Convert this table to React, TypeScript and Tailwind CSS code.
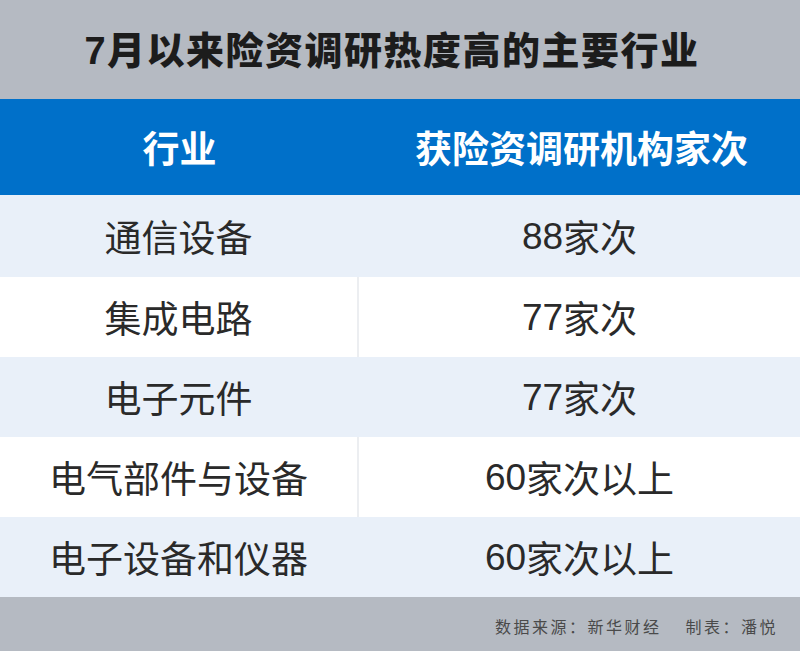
import type { JSX } from "react";

interface Row {
  readonly name: string;
  readonly num: string;
  readonly unit: string;
}

const ROWS: readonly Row[] = [
  { name: "通信设备", num: "88", unit: "家次" },
  { name: "集成电路", num: "77", unit: "家次" },
  { name: "电子元件", num: "77", unit: "家次" },
  { name: "电气部件与设备", num: "60", unit: "家次以上" },
  { name: "电子设备和仪器", num: "60", unit: "家次以上" },
];

const CJK = { fontFamily: '"Noto Sans CJK SC", "Noto Sans", sans-serif' };
const DIGITS = { fontFamily: '"Liberation Sans", "Noto Sans CJK SC", sans-serif' };

export default function App(): JSX.Element {
  return (
    <div className="flex h-[651px] w-[800px] flex-col bg-white" style={CJK}>
      <div className="flex h-[99px] items-center justify-center bg-[#b5bac2] pr-4">
        <h1 className="text-[38px] font-black leading-none tracking-[1.5px] text-[#1c1c1c]">
          <span style={DIGITS} className="font-bold">7</span>月以来险资调研热度高的主要行业
        </h1>
      </div>

      <div className="grid h-[96px] grid-cols-[359px_1fr] items-center bg-[#0070c9] text-[37px] font-bold leading-none text-white">
        <div className="text-center">行业</div>
        <div className="pl-1 text-center">获险资调研机构家次</div>
      </div>

      {ROWS.map((row, i) => {
        const light = i % 2 === 0;
        return (
          <div
            key={row.name}
            className={
              (light ? "bg-[#e9f0f9] " : "bg-white ") +
              (i === 0 ? "h-[82px] " : "h-[80px] ") +
              "grid grid-cols-[359px_1fr] text-[37px] leading-none text-[#2a2a2a]"
            }
          >
            <div
              className={
                (light ? "border-[#e9f0f9] " : "border-[#eceef1] ") +
                "flex items-center justify-center border-r-2"
              }
            >
              {row.name}
            </div>
            <div className="flex items-center justify-center">
              <span style={DIGITS}>{row.num}</span>
              <span>{row.unit}</span>
            </div>
          </div>
        );
      })}

      <div className="flex flex-1 items-center justify-end bg-[#b5bac2] pr-[22px] pt-1 text-[16px] tracking-[2.5px] text-[#4a4a4a]">
        <span>数据来源：新华财经</span>
        <span className="ml-6">制表：潘悦</span>
      </div>
    </div>
  );
}
